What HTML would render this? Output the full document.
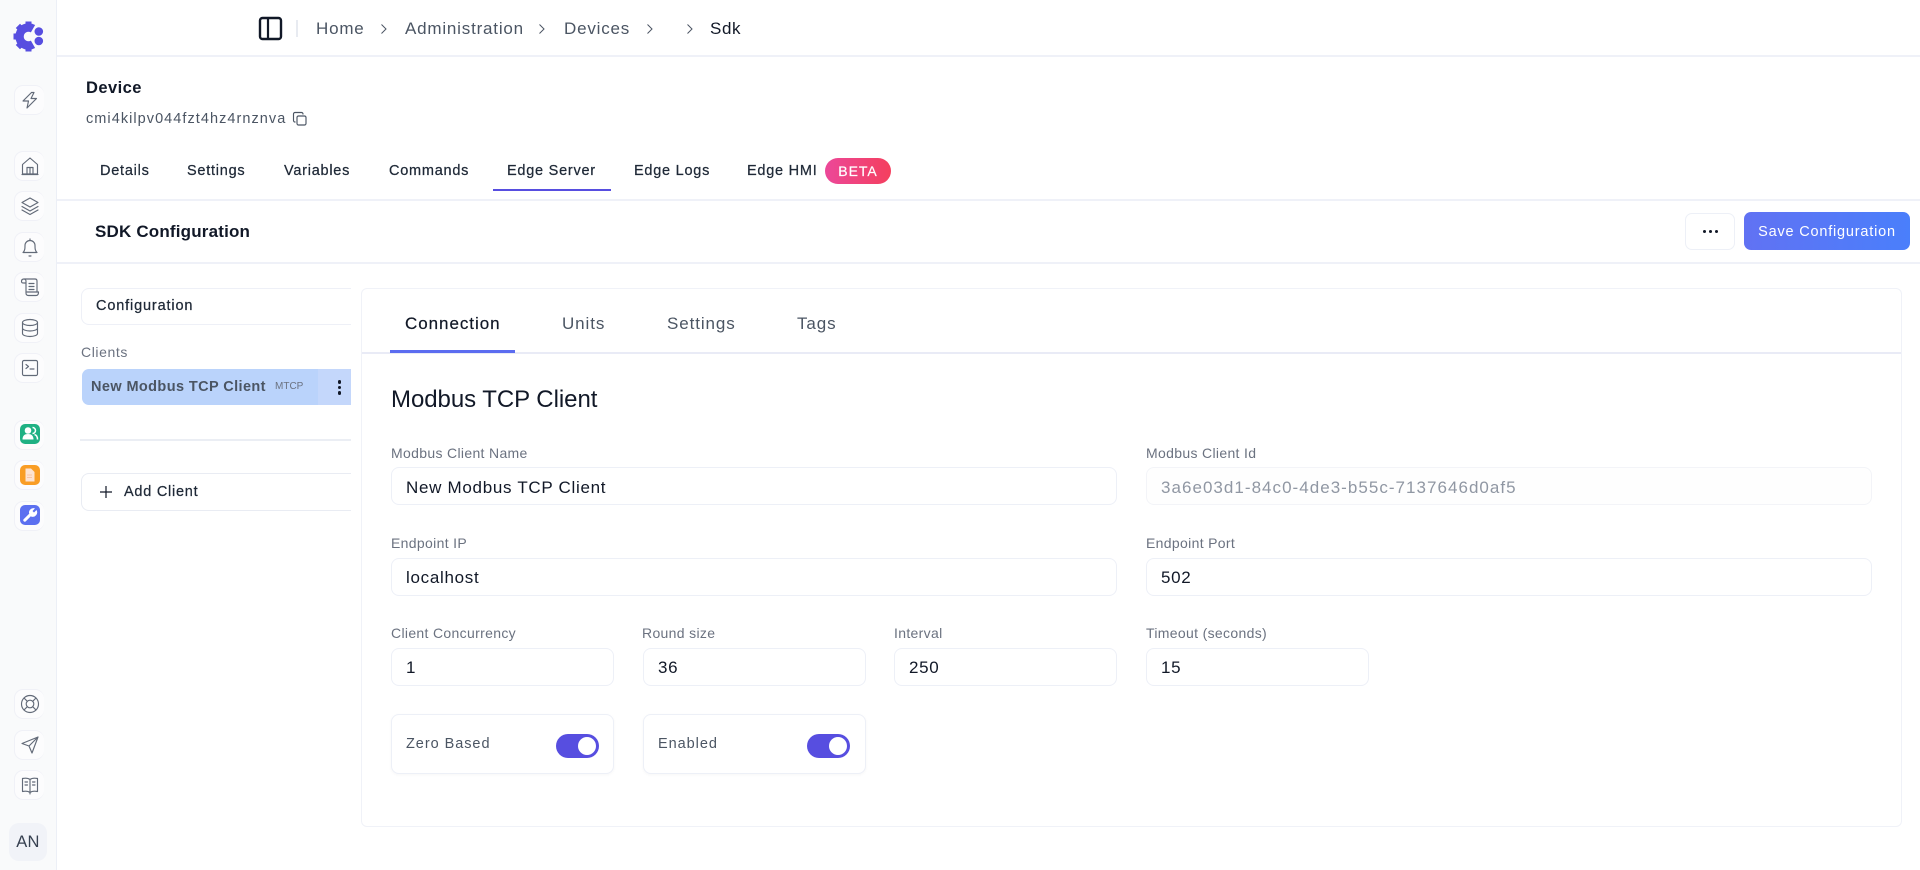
<!DOCTYPE html>
<html><head><meta charset="utf-8"><title>SDK Configuration</title>
<style>
html,body{margin:0;padding:0;width:1920px;height:870px;overflow:hidden;background:#fff;font-family:"Liberation Sans",sans-serif;color:#111827}
div,span,svg{position:absolute;box-sizing:border-box}
.t{white-space:nowrap;line-height:20px;height:20px}
.b{border:1.5px solid #edf0f7;border-radius:8px;background:#fff}
.sb{left:14px;width:30px;height:30px;border:1.5px solid #f0f1f7;border-right:none;border-radius:9px;background:#fcfcfd}
.ic{left:18px;width:24px;height:24px;fill:none;stroke:#626a78;stroke-width:1.15;stroke-linecap:round;stroke-linejoin:round}
.l{font-size:14px;color:#6b7280;letter-spacing:.33px}
.v{font-size:17px;color:#111827;letter-spacing:.7px}
.nav{font-size:17px;color:#4b5563;letter-spacing:.8px}
.tab{font-size:14.5px;font-weight:400;color:#1f2937;letter-spacing:.75px;-webkit-text-stroke:.25px #1f2937}
.ct{font-size:17px;color:#4b5563;letter-spacing:.9px}
.sw{width:43px;height:24px;border-radius:12px;background:#574ee0}
.sw i{position:absolute;right:3px;top:3px;width:18px;height:18px;border-radius:50%;background:#fff}
</style></head><body>
<div style="left:0;top:0;width:57px;height:870px;background:#f9fafb;border-right:1.5px solid #eceff6"></div>
<svg style="left:13px;top:20px;width:34px;height:34px" viewBox="0 0 34 34"><path fill="none" stroke="#574ee0" stroke-width="8.500" d="M20 8.700A9 9 0 1 0 20 24.300"/><g fill="#574ee0"><rect x="12.500" y="1.500" width="6" height="5"/><rect x="12.500" y="1.500" width="6" height="5" transform="rotate(-45 15.500 16.500)"/><rect x="12.500" y="1.500" width="6" height="5" transform="rotate(-90 15.500 16.500)"/><rect x="12.500" y="1.500" width="6" height="5" transform="rotate(-135 15.500 16.500)"/><rect x="12.500" y="1.500" width="6" height="5" transform="rotate(180 15.500 16.500)"/><circle cx="25.800" cy="11.500" r="4.300"/><circle cx="25.800" cy="21" r="4.300"/></g></svg>
<div class="sb" style="top:85px"></div><svg class="ic" style="top:88px" viewBox="0 0 24 24"><path d="M13.500 4.500L5 13h5.500L9 20l9.500-9.500H13l3-6zM13.500 4.500h2.500"/></svg>
<div class="sb" style="top:151px"></div><svg class="ic" style="top:154px" viewBox="0 0 24 24"><path d="M4.500 10.500L12 4l7.500 6.500V20h-15zM9 20v-6.500h6V20M12 13.500V20M4 20.500h16"/></svg>
<div class="sb" style="top:191px"></div><svg class="ic" style="top:194px" viewBox="0 0 24 24"><path d="M12 4l8 4.500-8 4.500-8-4.500zM4 12.500l8 4.500 8-4.500M4 16l8 4.500 8-4.500"/></svg>
<div class="sb" style="top:232px"></div><svg class="ic" style="top:235px" viewBox="0 0 24 24"><path d="M5 17.500c2-2 2-4 2-7a5 5 0 0 1 10 0c0 3 0 5 2 7zM11 21h2M12 4v1"/></svg>
<div class="sb" style="top:272px"></div><svg class="ic" style="top:275px" viewBox="0 0 24 24"><path d="M6 4h11c1.500 0 2 1 2 2v11H9M6 4c-1.500 0-2.500 1-2.500 2.500S4.500 8 6 8h2V6c0-1-1-2-2-2zM8 8v10c0 1.500 1 2.500 2.500 2.500H18c1.500 0 2.500-1 2.500-3.500H9M11 8.500h5M11 11.500h5M11 14.500h5"/></svg>
<div class="sb" style="top:313px"></div><svg class="ic" style="top:316px" viewBox="0 0 24 24"><ellipse cx="12" cy="6.500" rx="7.500" ry="3"/><path d="M4.500 6.500v11c0 1.700 3.400 3 7.500 3s7.500-1.300 7.500-3v-11M4.500 12c0 1.700 3.400 3 7.500 3s7.500-1.300 7.500-3"/></svg>
<div class="sb" style="top:353px"></div><svg class="ic" style="top:356px" viewBox="0 0 24 24"><rect x="4.500" y="4.500" width="15" height="15" rx="1.500"/><path d="M8 8.500l2.500 2L8 12.500M12 13h4"/></svg>
<div class="sb" style="top:420px"></div><svg style="left:20px;top:424px;width:20px;height:20px" viewBox="0 0 20 20"><rect width="20" height="20" rx="5" fill="#1fb184"/><circle cx="8" cy="6.500" r="3.300" fill="#fff"/><path fill="#fff" d="M2.500 15.500c0-4 2.300-5.500 5.500-5.500s5.500 1.500 5.500 5.500z"/><path d="M12.500 3.500a3 3 0 0 1 0 6M14.500 10.500c2 .5 3 2 3 5" fill="none" stroke="#fff" stroke-width="1.500"/></svg>
<div class="sb" style="top:460px"></div><svg style="left:20px;top:465px;width:20px;height:20px" viewBox="0 0 20 20"><rect width="20" height="20" rx="5" fill="#f99d25"/><path fill="#fde3d2" d="M5.500 3.500h5.500l3.500 3.500v9.500h-9z"/><path d="M7 10h5M7 12.500h5" stroke="#f9c4a8" stroke-width="1"/></svg>
<div class="sb" style="top:501px"></div><svg style="left:20px;top:505px;width:20px;height:20px" viewBox="0 0 20 20"><rect width="20" height="20" rx="5" fill="#5c70f0"/><path fill="none" stroke="#fff" stroke-width="3" stroke-linecap="round" d="M4.800 15.200l6.200-6.200"/><path fill="#fff" d="M9 8a4.500 4.500 0 0 1 6-4.600L12.500 6l1.500 1.500L16.500 5A4.500 4.500 0 0 1 11 11.500z"/></svg>
<div class="sb" style="top:689px"></div><svg class="ic" style="top:692px" viewBox="0 0 24 24"><circle cx="12" cy="12" r="8.500"/><circle cx="12" cy="12" r="3.800"/><path d="M6 6l3.300 3.300M18 6l-3.300 3.300M6 18l3.300-3.300M18 18l-3.300-3.300"/></svg>
<div class="sb" style="top:730px"></div><svg class="ic" style="top:733px" viewBox="0 0 24 24"><path d="M4 10.500L20 4l-6 16-3-7zM11 13l9-9"/></svg>
<div class="sb" style="top:770px"></div><svg class="ic" style="top:773px" viewBox="0 0 24 24"><path d="M12 6.500C10 5 7 5 4.500 5.500v13C7 18 10 18 12 19.500c2-1.500 5-1.500 7.500-1V5.500C17 5 14 5 12 6.500zM12 6.500V21M7 9h2.500M7 12h2.500M14.500 9H17M14.500 12H17"/></svg>
<div style="left:9px;top:823px;width:38px;height:38px;background:#f1f3f8;border-radius:10px"></div>
<div class="t" style="left:9px;top:832px;width:38px;text-align:center;font-size:16.500px;color:#374151;letter-spacing:.3px">AN</div>

<div style="left:57px;top:55px;width:1863px;height:1.500px;background:#eff1f8"></div>
<svg style="left:257px;top:15px;width:26px;height:26px" viewBox="0 0 26 26"><rect x="3" y="3" width="21" height="21" rx="2.500" fill="none" stroke="#111827" stroke-width="2.400"/><path d="M11 3v21" stroke="#111827" stroke-width="2.200"/></svg>
<div style="left:296px;top:20px;width:1.500px;height:17px;background:#e8ebf1"></div>
<div class="t nav" style="left:316px;top:19px">Home</div>
<div class="t nav" style="left:405px;top:19px">Administration</div>
<div class="t nav" style="left:564px;top:19px">Devices</div>
<div class="t" style="left:710px;top:19px;font-size:17px;color:#111827;letter-spacing:.6px">Sdk</div>
<svg style="left:378px;top:23px;width:12px;height:12px" viewBox="0 0 12 12"><path d="M3.500 1.500l4.500 4.500-4.500 4.500" fill="none" stroke="#4b5563" stroke-width="1"/></svg>
<svg style="left:536px;top:23px;width:12px;height:12px" viewBox="0 0 12 12"><path d="M3.500 1.500l4.500 4.500-4.500 4.500" fill="none" stroke="#4b5563" stroke-width="1"/></svg>
<svg style="left:644px;top:23px;width:12px;height:12px" viewBox="0 0 12 12"><path d="M3.500 1.500l4.500 4.500-4.500 4.500" fill="none" stroke="#4b5563" stroke-width="1"/></svg>
<svg style="left:684px;top:23px;width:12px;height:12px" viewBox="0 0 12 12"><path d="M3.500 1.500l4.500 4.500-4.500 4.500" fill="none" stroke="#4b5563" stroke-width="1"/></svg>

<div class="t" style="left:86px;top:78px;font-size:16.500px;font-weight:700;color:#111827;letter-spacing:.45px">Device</div>
<div class="t" style="left:86px;top:109px;font-size:14.500px;color:#4b5563;letter-spacing:1.050px">cmi4kilpv044fzt4hz4rnznva</div>
<svg style="left:292px;top:111px;width:16px;height:16px" viewBox="0 0 16 16"><rect x="5" y="5" width="9" height="9" rx="1.500" fill="none" stroke="#4b5563" stroke-width="1.150"/><path d="M11 3.500V3a1.500 1.500 0 0 0-1.500-1.500H3A1.500 1.500 0 0 0 1.500 3v6.500A1.500 1.500 0 0 0 3 11h.5" fill="none" stroke="#4b5563" stroke-width="1.150"/></svg>

<div class="t tab" style="left:100px;top:161px">Details</div>
<div class="t tab" style="left:187px;top:161px">Settings</div>
<div class="t tab" style="left:284px;top:161px">Variables</div>
<div class="t tab" style="left:389px;top:161px">Commands</div>
<div class="t tab" style="left:507px;top:161px">Edge Server</div>
<div class="t tab" style="left:634px;top:161px">Edge Logs</div>
<div class="t tab" style="left:747px;top:161px">Edge HMI</div>
<div style="left:493px;top:189px;width:118px;height:2px;background:#574ee0"></div>
<div class="t" style="left:825px;top:158px;width:66px;height:26px;line-height:26px;border-radius:13px;background:linear-gradient(90deg,#ec4899,#f43f5e);color:#fff;text-align:center;font-size:14px;letter-spacing:1px;-webkit-text-stroke:.2px #fff">BETA</div>
<div style="left:57px;top:199px;width:1863px;height:1.500px;background:#eff1f8"></div>

<div class="t" style="left:95px;top:222px;font-size:17px;font-weight:700;color:#111827;letter-spacing:.18px">SDK Configuration</div>
<div class="b" style="left:1685px;top:213px;width:50px;height:37px;border-radius:7px"></div>
<div style="left:1703px;top:230px;width:3px;height:3px;border-radius:50%;background:#111827"></div>
<div style="left:1709px;top:230px;width:3px;height:3px;border-radius:50%;background:#111827"></div>
<div style="left:1715px;top:230px;width:3px;height:3px;border-radius:50%;background:#111827"></div>
<div class="t" style="left:1744px;top:212px;width:166px;height:38px;line-height:40px;border-radius:7px;background:linear-gradient(90deg,#6172f3,#4a7ffb);color:#fff;text-align:center;font-size:14.500px;letter-spacing:.8px">Save Configuration</div>
<div style="left:57px;top:262px;width:1863px;height:1.500px;background:#eff1f8"></div>

<div style="left:81px;top:288px;width:270px;height:37px;border:1.500px solid #eef0f7;border-right:none;border-radius:8px 0 0 8px"></div>
<div class="t tab" style="left:96px;top:296px;letter-spacing:.85px">Configuration</div>
<div class="t" style="left:81px;top:342px;font-size:14px;color:#6b7280;letter-spacing:.6px">Clients</div>
<div style="left:82px;top:369px;width:269px;height:36px;background:#bad3fb;border-radius:7px 0 0 7px"></div>
<div style="left:318px;top:369px;width:33px;height:36px;background:#c4d7fb"></div>
<div class="t" style="left:91px;top:377px;font-size:14.500px;font-weight:700;color:#4b5563;letter-spacing:.4px">New Modbus TCP Client</div>
<div class="t" style="left:275px;top:377px;font-size:10px;color:#6b7280;letter-spacing:0">MTCP</div>
<div style="left:337.500px;top:380px;width:3.500px;height:3.500px;border-radius:50%;background:#111827"></div>
<div style="left:337.500px;top:385.500px;width:3.500px;height:3.500px;border-radius:50%;background:#111827"></div>
<div style="left:337.500px;top:391px;width:3.500px;height:3.500px;border-radius:50%;background:#111827"></div>
<div style="left:80px;top:439px;width:271px;height:1.500px;background:#ebeef4"></div>
<div style="left:81px;top:473px;width:270px;height:38px;border:1.500px solid #e9ecf3;border-right:none;border-radius:8px 0 0 8px"></div>
<svg style="left:98px;top:484px;width:16px;height:16px" viewBox="0 0 16 16"><path d="M8 2v12M2 8h12" stroke="#111827" stroke-width="1.200"/></svg>
<div class="t tab" style="left:124px;top:482px">Add Client</div>

<div style="left:361px;top:288px;width:1541px;height:539px;border:1.500px solid #f0f2f8;border-radius:6px"></div>
<div style="left:362px;top:352px;width:1539px;height:1.500px;background:#e9ebf6"></div>
<div style="left:390px;top:350px;width:125px;height:2.500px;background:#5b6cf0"></div>
<div class="t" style="left:405px;top:314px;font-size:17px;color:#111827;letter-spacing:.95px;-webkit-text-stroke:.2px #111827">Connection</div>
<div class="t ct" style="left:562px;top:314px">Units</div>
<div class="t ct" style="left:667px;top:314px">Settings</div>
<div class="t ct" style="left:797px;top:314px">Tags</div>
<div class="t" style="left:391px;top:390px;font-size:24px;color:#111827;letter-spacing:-.05px">Modbus TCP Client</div>

<div class="t l" style="left:391px;top:443px">Modbus Client Name</div>
<div class="b" style="left:391px;top:467px;width:726px;height:38px"></div>
<div class="t v" style="left:406px;top:478px">New Modbus TCP Client</div>
<div class="t l" style="left:1146px;top:443px">Modbus Client Id</div>
<div class="b" style="left:1146px;top:467px;width:726px;height:38px;border-color:#f3f4f8;background:#fefefe"></div>
<div class="t v" style="left:1161px;top:478px;color:#9097a3;letter-spacing:1.03px">3a6e03d1-84c0-4de3-b55c-7137646d0af5</div>

<div class="t l" style="left:391px;top:533px">Endpoint IP</div>
<div class="b" style="left:391px;top:558px;width:726px;height:38px"></div>
<div class="t v" style="left:406px;top:568px">localhost</div>
<div class="t l" style="left:1146px;top:533px">Endpoint Port</div>
<div class="b" style="left:1146px;top:558px;width:726px;height:38px"></div>
<div class="t v" style="left:1161px;top:568px">502</div>

<div class="t l" style="left:391px;top:623px">Client Concurrency</div>
<div class="b" style="left:391px;top:648px;width:223px;height:38px"></div>
<div class="t v" style="left:406px;top:658px">1</div>
<div class="t l" style="left:642px;top:623px">Round size</div>
<div class="b" style="left:643px;top:648px;width:223px;height:38px"></div>
<div class="t v" style="left:658px;top:658px">36</div>
<div class="t l" style="left:894px;top:623px">Interval</div>
<div class="b" style="left:894px;top:648px;width:223px;height:38px"></div>
<div class="t v" style="left:909px;top:658px">250</div>
<div class="t l" style="left:1146px;top:623px">Timeout (seconds)</div>
<div class="b" style="left:1146px;top:648px;width:223px;height:38px"></div>
<div class="t v" style="left:1161px;top:658px">15</div>

<div class="b" style="left:391px;top:714px;width:223px;height:60px;box-shadow:0 1px 3px rgba(17,24,39,.04)"></div>
<div class="t" style="left:406px;top:734px;font-size:14.500px;color:#4b5563;letter-spacing:.95px">Zero Based</div>
<div class="sw" style="left:556px;top:734px"><i></i></div>
<div class="b" style="left:643px;top:714px;width:223px;height:60px;box-shadow:0 1px 3px rgba(17,24,39,.04)"></div>
<div class="t" style="left:658px;top:734px;font-size:14.500px;color:#4b5563;letter-spacing:.95px">Enabled</div>
<div class="sw" style="left:807px;top:734px"><i></i></div>
</body></html>
